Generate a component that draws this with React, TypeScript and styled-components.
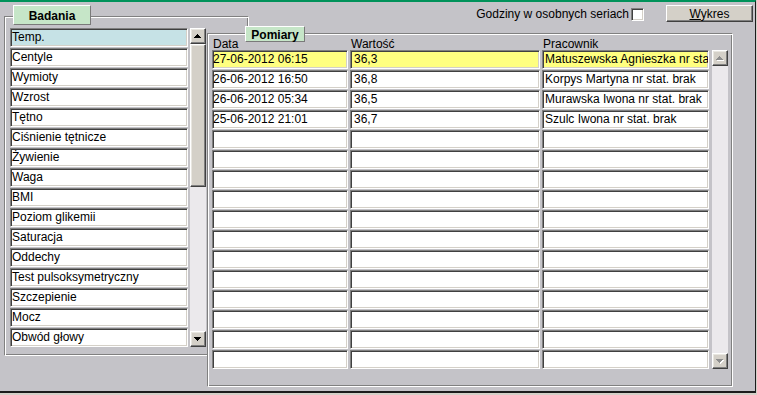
import styled, { createGlobalStyle } from "styled-components";

const GlobalStyle = createGlobalStyle`
  html, body {
    margin: 0;
    padding: 0;
    background: #d4d0c8;
  }
`;

const badania = [
  "Temp.",
  "Centyle",
  "Wymioty",
  "Wzrost",
  "Tętno",
  "Ciśnienie tętnicze",
  "Żywienie",
  "Waga",
  "BMI",
  "Poziom glikemii",
  "Saturacja",
  "Oddechy",
  "Test pulsoksymetryczny",
  "Szczepienie",
  "Mocz",
  "Obwód głowy",
];

const pomiary = [
  ["27-06-2012 06:15", "36,3", "Matuszewska Agnieszka nr stat. brak"],
  ["26-06-2012 16:50", "36,8", "Korpys Martyna nr stat. brak"],
  ["26-06-2012 05:34", "36,5", "Murawska Iwona nr stat. brak"],
  ["25-06-2012 21:01", "36,7", "Szulc Iwona nr stat. brak"],
];

const ROWS = 16;

function Arrow({ dir, disabled }: { dir: "up" | "down"; disabled?: boolean }) {
  const pts = dir === "up" ? "3.5,0 7,4 0,4" : "0,0 7,0 3.5,4";
  return (
    <svg width="8" height="5" viewBox="0 0 8 5" shapeRendering="crispEdges">
      {disabled && <polygon points={pts} fill="#ffffff" transform="translate(1,1)" />}
      <polygon points={pts} fill={disabled ? "#8e8e8e" : "#000000"} />
    </svg>
  );
}

function ScrollBar({ thumb, disabled }: { thumb?: number; disabled?: boolean }) {
  return (
    <Scroll>
      <ArrowBtn>
        <Arrow dir="up" disabled={disabled} />
      </ArrowBtn>
      {thumb && <Thumb style={{ height: thumb }} />}
      <Track />
      <ArrowBtn>
        <Arrow dir="down" disabled={disabled} />
      </ArrowBtn>
    </Scroll>
  );
}

export default function App() {
  const rows = Array.from({ length: ROWS }, (_, i) => pomiary[i] || ["", "", ""]);
  return (
    <>
      <GlobalStyle />
      <Win>
        <Toolbar>
          <CheckLabel>Godziny w osobnych seriach</CheckLabel>
          <Check />
          <Button>
            <u>W</u>ykres
          </Button>
        </Toolbar>

        <Group $col="2 / 4" $row="2 / 5">
          <Legend $left={9} $width={78} $height={20}>
            Badania
          </Legend>
          <Frame $padLeft={5} $padTop={11}>
            <ListWrap>
              <List>
                {badania.map((b, i) => (
                  <Field key={b} $bg={i === 0 ? "#c6e2e6" : "#ffffff"}>
                    {b}
                  </Field>
                ))}
              </List>
              <ScrollBar thumb={143} />
            </ListWrap>
          </Frame>
        </Group>

        <Group $col="3 / 5" $row="4 / 6">
          <Legend $left={38} $width={60} $height={16}>
            Pomiary
          </Legend>
          <Frame $padLeft={4} $padTop={0}>
            <HeadRow>
              <Head>Data</Head>
              <Head>Wartość</Head>
              <Head>Pracownik</Head>
            </HeadRow>
            <ListWrap>
              <Table>
                {rows.map((r, i) =>
                  r.map((c, j) => (
                    <Cell key={`${i}-${j}`} $bg={i === 0 ? "#ffff80" : "#ffffff"} $pad={[0, 3, 2][j]}>
                      {c}
                    </Cell>
                  ))
                )}
              </Table>
              <ScrollBar disabled />
            </ListWrap>
          </Frame>
        </Group>
      </Win>
    </>
  );
}

const Win = styled.div`
  width: 756px;
  height: 393px;
  box-sizing: border-box;
  background: #c4c3c8;
  border-top: 2px solid #00925a;
  border-right: 1px solid #1c1c1c;
  border-bottom: 2px solid #1c1c1c;
  display: grid;
  grid-template-columns: 4px 203px 42px 484px 20px 1fr;
  grid-template-rows: 3px 17px 4px 330px 31px 1fr;
  font-family: "Liberation Sans", Arial, sans-serif;
  font-size: 12px;
  color: #000;
`;

const Toolbar = styled.div`
  grid-column: 4 / 6;
  grid-row: 2 / 3;
  display: flex;
  align-items: center;
  justify-content: flex-end;
`;

const CheckLabel = styled.span`
  line-height: 14px;
  margin-top: 1px;
  margin-right: 2px;
`;

const Check = styled.div`
  width: 13px;
  height: 13px;
  box-sizing: border-box;
  background: #fff;
  border: 1px solid;
  border-color: #808080 #ffffff #ffffff #808080;
  box-shadow: inset 1px 1px #404040, inset -1px -1px #d4d0c8;
  margin-right: 22px;
  margin-top: 1px;
`;

const Button = styled.div`
  width: 87px;
  height: 17px;
  box-sizing: border-box;
  background: #d4d0c8;
  border: 1px solid;
  border-color: #ffffff #404040 #404040 #ffffff;
  box-shadow: inset -1px -1px #808080;
  display: flex;
  align-items: center;
  justify-content: center;
  line-height: 14px;
`;

const Group = styled.div<{ $col: string; $row: string }>`
  grid-column: ${(p) => p.$col};
  grid-row: ${(p) => p.$row};
  display: flex;
  flex-direction: column;
  min-height: 0;
`;

const Legend = styled.div<{ $left: number; $width: number; $height: number }>`
  position: relative;
  z-index: 1;
  align-self: flex-start;
  margin-left: ${(p) => p.$left}px;
  margin-bottom: -9px;
  width: ${(p) => p.$width}px;
  height: ${(p) => p.$height}px;
  box-sizing: border-box;
  background: #c6e6c8;
  border: 1px solid;
  border-color: #ffffff #7a7a7a #7a7a7a #ffffff;
  font-weight: bold;
  display: flex;
  align-items: center;
  justify-content: center;
  padding-top: 1px;
`;

const Frame = styled.div<{ $padLeft: number; $padTop: number }>`
  flex: 1;
  background: #c4c3c8;
  border: 1px solid;
  border-color: #808080 #ffffff #ffffff #808080;
  box-shadow: inset 1px 1px #ffffff, inset -1px -1px #808080;
  padding: ${(p) => p.$padTop}px 0 0 ${(p) => p.$padLeft}px;
`;

const ListWrap = styled.div`
  display: flex;
  align-items: stretch;
  gap: 2px;
`;

const List = styled.div`
  width: 178px;
  display: flex;
  flex-direction: column;
  gap: 1px;
`;

const sunken = `
  box-sizing: border-box;
  height: 19px;
  border: 1px solid;
  border-color: #808080 #ffffff #ffffff #808080;
  box-shadow: inset 1px 1px #404040, inset -1px -1px #d4d0c8;
  line-height: 17px;
  white-space: nowrap;
  overflow: hidden;
`;

const Field = styled.div<{ $bg: string }>`
  ${sunken}
  background: ${(p) => p.$bg};
  padding-left: 1px;
`;

const HeadRow = styled.div`
  height: 16px;
  display: grid;
  grid-template-columns: 136px 190px 167px;
  column-gap: 2px;
  align-items: end;
`;

const Head = styled.div`
  line-height: 14px;
  padding-left: 1px;
  margin-bottom: -1px;
`;

const Table = styled.div`
  display: grid;
  grid-template-columns: 136px 190px 167px;
  grid-auto-rows: 19px;
  column-gap: 2px;
  row-gap: 1px;
  margin-right: 1px;
`;

const Cell = styled.div<{ $bg: string; $pad: number }>`
  ${sunken}
  background: ${(p) => p.$bg};
  padding-left: ${(p) => p.$pad}px;
`;

const Scroll = styled.div`
  width: 16px;
  display: flex;
  flex-direction: column;
  background: #ebe9ec;
`;

const raised = `
  box-sizing: border-box;
  background: #d4d0c8;
  border: 1px solid;
  border-color: #ffffff #404040 #404040 #ffffff;
  box-shadow: inset -1px -1px #808080, inset 1px 1px #e8e6e0;
`;

const ArrowBtn = styled.div`
  ${raised}
  height: 16px;
  flex: none;
  display: flex;
  align-items: center;
  justify-content: center;
`;

const Thumb = styled.div`
  ${raised}
  flex: none;
`;

const Track = styled.div`
  flex: 1;
`;
